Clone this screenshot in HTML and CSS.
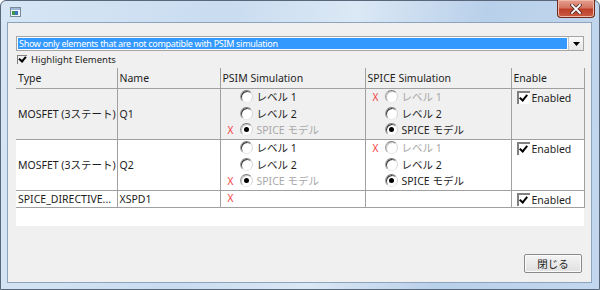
FILE: index.html
```html
<!DOCTYPE html>
<html lang="ja">
<head>
  <meta charset="UTF-8">
  <title>Compatibility</title>
  <link rel="stylesheet" href="styles.css">
</head>
<body>
  <div class="window">
    <div class="titlebar">
      <svg class="app-icon" width="11" height="10" viewBox="0 0 11 10">
        <rect x="0.5" y="0.5" width="10" height="9" fill="#eef3f8" stroke="#7a8a9a"/>
        <rect x="1" y="1" width="9" height="2" fill="#9fb7d3"/>
        <rect x="2" y="4" width="3" height="4" fill="#3c9a4a"/>
        <rect x="5" y="4" width="3" height="4" fill="#3b6fc2"/>
      </svg>
      <button class="close" title="Close">
        <svg width="12" height="10" viewBox="0 0 12 10">
          <path d="M2 1 L10 9 M10 1 L2 9" stroke="#4a2a26" stroke-width="3.4" stroke-linecap="square"/>
          <path d="M2 1 L10 9 M10 1 L2 9" stroke="#fff" stroke-width="1.8" stroke-linecap="square"/>
        </svg>
      </button>
    </div>
    <div class="client">
      <div class="combo">
        <span class="combo-text">Show only elements that are not compatible with PSIM simulation</span>
        <span class="combo-btn">
          <svg width="7" height="4" viewBox="0 0 7 4"><path d="M0 0 H7 L3.5 4 Z" fill="#000"/></svg>
        </span>
      </div>
      <label class="highlight"><span class="tick small"></span>Highlight Elements</label>
      <div class="grid">
        <table>
          <colgroup>
            <col class="c-type"><col class="c-name"><col class="c-psim"><col class="c-spice"><col class="c-enable">
          </colgroup>
          <thead>
            <tr><th>Type</th><th>Name</th><th>PSIM Simulation</th><th>SPICE Simulation</th><th>Enable</th></tr>
          </thead>
          <tbody>
            <tr class="alt">
              <td class="mid">MOSFET (3ステート)</td>
              <td class="mid">Q1</td>
              <td class="opts">
                <div class="opt"><span class="mark"></span><span class="radio"></span>レベル 1</div>
                <div class="opt"><span class="mark"></span><span class="radio"></span>レベル 2</div>
                <div class="opt off"><span class="mark">X</span><span class="radio on"></span>SPICE モデル</div>
              </td>
              <td class="opts">
                <div class="opt off"><span class="mark">X</span><span class="radio"></span>レベル 1</div>
                <div class="opt"><span class="mark"></span><span class="radio"></span>レベル 2</div>
                <div class="opt"><span class="mark"></span><span class="radio on"></span>SPICE モデル</div>
              </td>
              <td class="top"><div class="enabled"><span class="tick"></span>Enabled</div></td>
            </tr>
            <tr>
              <td class="mid">MOSFET (3ステート)</td>
              <td class="mid">Q2</td>
              <td class="opts">
                <div class="opt"><span class="mark"></span><span class="radio"></span>レベル 1</div>
                <div class="opt"><span class="mark"></span><span class="radio"></span>レベル 2</div>
                <div class="opt off"><span class="mark">X</span><span class="radio on"></span>SPICE モデル</div>
              </td>
              <td class="opts">
                <div class="opt off"><span class="mark">X</span><span class="radio"></span>レベル 1</div>
                <div class="opt"><span class="mark"></span><span class="radio"></span>レベル 2</div>
                <div class="opt"><span class="mark"></span><span class="radio on"></span>SPICE モデル</div>
              </td>
              <td class="top"><div class="enabled"><span class="tick"></span>Enabled</div></td>
            </tr>
            <tr class="short">
              <td>SPICE_DIRECTIVE...</td>
              <td>XSPD1</td>
              <td class="opts"><div class="opt single"><span class="mark">X</span></div></td>
              <td></td>
              <td class="top"><div class="enabled"><span class="tick"></span>Enabled</div></td>
            </tr>
          </tbody>
        </table>
      </div>
      <div class="footer">
        <button class="btn">閉じる</button>
      </div>
    </div>
  </div>
</body>
</html>
```

FILE: styles.css
```css
:root {
  --face: #f0f0f0;
  --line: #a0a0a0;
  --text: #1e1e1e;
  --muted: #a8a8a8;
  --red: #f03a3a;
}
* { box-sizing: border-box; }
body { margin: 0; background: #fff; font-family: "Noto Sans", "Noto Sans CJK JP", sans-serif; font-size: 10.5px; color: var(--text); }

.window { width: 600px; height: 290px; border: 1px solid #58687a; border-radius: 6px 6px 0 0; background: linear-gradient(100deg, #d7e6f5 0%, #c9dcf0 35%, #dbe8f5 55%, #b9d0ea 75%, #c3d8ee 100%); padding: 0 7px 6px 6px; display: flex; flex-direction: column; }
.titlebar { height: 21px; display: flex; align-items: flex-start; justify-content: space-between; }
.app-icon { margin: 6px 0 0 3px; }
.close { width: 38px; height: 18px; margin: -1px -3px 0 0; border: 1px solid #6b2a20; border-top: none; border-radius: 0 0 4px 4px; background: linear-gradient(#e6a08f 0%, #d47561 45%, #c0402a 55%, #c95a40 100%); display: flex; align-items: center; justify-content: center; padding: 0; box-shadow: inset 0 0 0 1px #f0b8a8; }

.client { flex: 1; background: var(--face); border: 1px solid #8ea4bd; padding: 13px 7px 0 8px; display: flex; flex-direction: column; }

.combo { height: 15px; display: flex; border: 1px solid #a5a5a5; background: #fff; }
.combo-text { flex: 1; background: #3399ff; color: #fff; margin: 1px; height: 11px; line-height: 11px; padding-left: 1px; font-size: 9px; letter-spacing: -0.3px; white-space: nowrap; }
.combo-btn { width: 15px; border-left: 1px solid #c4c4c4; background: linear-gradient(#fafafa, #e6e6e6); display: flex; align-items: center; justify-content: center; }

.highlight { height: 17px; display: flex; align-items: center; gap: 4px; padding-left: 1px; font-size: 9.5px; }

.tick { width: 13px; height: 13px; border-top: 2px solid #808080; border-left: 2px solid #808080; background: #fff; position: relative; flex: none; }
.tick::after { content: ""; position: absolute; left: 2px; top: 0; width: 3px; height: 6px; border: solid #000; border-width: 0 2px 2px 0; transform: rotate(40deg); }
.tick.small { width: 10px; height: 9px; background: none; border-top-width: 1px; border-left-width: 1px; }
.tick.small::after { left: 2px; top: -1px; height: 5px; }

.grid { height: 158px; background: #fff; }
table { border-collapse: collapse; table-layout: fixed; width: 568px; }
.c-type { width: 101px; }
.c-name { width: 103px; }
.c-psim { width: 145px; }
.c-spice { width: 146px; }
.c-enable { width: 73px; }
th, td { border: 1px solid var(--line); padding: 0 0 0 2px; white-space: nowrap; text-align: left; font-weight: normal; }
tr > :first-child { border-left: none; }
thead th { height: 20px; background: var(--face); border-top: none; padding-top: 1px; }
tbody tr { height: 51px; }
tbody tr.alt { background: var(--face); }
tbody tr.short { height: 17px; }
td.mid { vertical-align: middle; }
td.top, td.opts { vertical-align: top; }
td.opts { padding: 0 0 0 7px; }

.opt { height: 16.5px; display: flex; align-items: center; }
.opt.single { height: 15px; }
.opt.off { color: var(--muted); }
.mark { width: 12px; color: var(--red); font-size: 10px; flex: none; }
.radio { width: 13px; height: 13px; border-radius: 50%; border: 1px solid; border-color: #7a7a7a #d6d6d6 #e8e8e8 #9a9a9a; background: #fff; box-shadow: inset 1px 1px 0 #3c3c3c; margin-right: 4px; position: relative; flex: none; }
.radio.on::after { content: ""; position: absolute; left: 3px; top: 3px; width: 5px; height: 5px; border-radius: 50%; background: #000; }
.opt.off .radio { box-shadow: inset 1px 1px 0 #c8c8c8; }

.enabled { display: flex; align-items: center; gap: 2px; padding: 2px 0 0 3px; }

.footer { flex: 1; display: flex; justify-content: flex-end; align-items: flex-end; padding: 0 2px 9px 0; }
.btn { width: 58px; height: 19px; border: 1px solid #8a8a8a; border-radius: 2px; background: linear-gradient(#f4f4f4, #e0e0e0); font: inherit; font-size: 10.5px; color: #222; padding: 0; box-shadow: inset 0 0 0 1px #fbfbfb; }
```
